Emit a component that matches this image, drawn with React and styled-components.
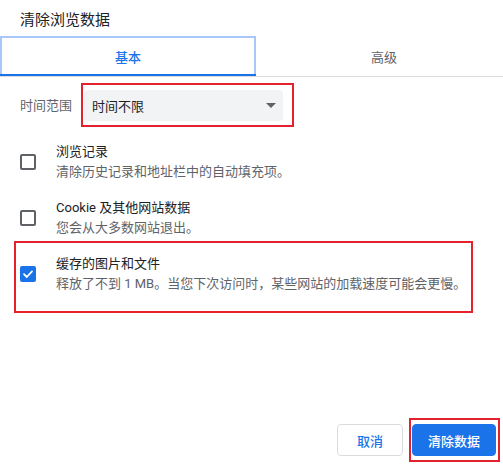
import styled, { createGlobalStyle } from "styled-components";

const GlobalStyle = createGlobalStyle`
  html, body {
    margin: 0;
    padding: 0;
    background: #fff;
  }
  body {
    font-family: Roboto, "Noto Sans CJK SC", "Noto Sans", sans-serif;
    color: #202124;
  }
`;

const Dialog = styled.div`
  position: relative;
  width: 503px;
  height: 464px;
  display: flex;
  flex-direction: column;
  overflow: hidden;
  background: #fff;
`;

const Title = styled.h2`
  margin: 0;
  padding: 10px 20px 0;
  font-size: 15px;
  line-height: 20px;
  font-weight: 400;
  color: #202124;
`;

const Tabs = styled.div`
  margin-top: 6px;
  display: grid;
  grid-template-columns: 256px 256px;
  border-bottom: 1px solid #dadce0;
`;

const Tab = styled.div`
  position: relative;
  height: 40px;
  display: flex;
  align-items: center;
  justify-content: center;
  font-size: 13px;
  font-weight: ${(p) => (p.$active ? 500 : 400)};
  color: ${(p) => (p.$active ? "#1a73e8" : "#5f6368")};
  box-shadow: ${(p) => (p.$active ? "inset 0 0 0 2px #a8c7fa" : "none")};

  &::after {
    content: "";
    display: ${(p) => (p.$active ? "block" : "none")};
    position: absolute;
    left: 0;
    right: 0;
    bottom: 0;
    height: 2px;
    background: #1a73e8;
  }
`;

const Highlight = styled.span`
  position: absolute;
  top: ${(p) => p.$top}px;
  left: ${(p) => p.$left}px;
  right: ${(p) => p.$right}px;
  bottom: ${(p) => p.$bottom}px;
  border: 2px solid #e3222d;
  pointer-events: none;
`;

const RangeRow = styled.div`
  margin-top: 13px;
  padding: 0 20px;
  display: flex;
  align-items: center;
  gap: 12px;
`;

const Label = styled.span`
  font-size: 13px;
  line-height: 20px;
  color: #5f6368;
`;

const SelectWrap = styled.div`
  position: relative;
`;

const Select = styled.div`
  width: 199px;
  height: 31px;
  box-sizing: border-box;
  padding: 0 7px 0 8px;
  display: flex;
  align-items: center;
  justify-content: space-between;
  background: #f1f3f4;
  border-radius: 4px;
  font-size: 13px;
  color: #202124;
`;

const Arrow = styled.span`
  width: 0;
  height: 0;
  border-left: 5px solid transparent;
  border-right: 5px solid transparent;
  border-top: 5px solid #5f6368;
`;

const List = styled.div`
  margin-top: 13px;
  padding: 0 20px;
  display: flex;
  flex-direction: column;
`;

const Row = styled.div`
  position: relative;
  padding: 8px 0;
  display: flex;
  align-items: center;
  gap: 20px;
`;

const Box = styled.span`
  width: 16px;
  height: 16px;
  box-sizing: border-box;
  flex: none;
  border-radius: 2px;
  border: 2px solid ${(p) => (p.$checked ? "#1a73e8" : "#5f6368")};
  background: ${(p) => (p.$checked ? "#1a73e8" : "transparent")};
  display: flex;
  align-items: center;
  justify-content: center;
`;

const Texts = styled.div`
  display: flex;
  flex-direction: column;
`;

const RowTitle = styled.span`
  font-size: 13px;
  line-height: 20px;
  color: #202124;
`;

const RowSub = styled.span`
  font-size: 13px;
  line-height: 20px;
  color: #5f6368;
`;

const Footer = styled.div`
  margin-top: auto;
  padding: 0 7px 8px 0;
  display: flex;
  justify-content: flex-end;
  gap: 9px;
`;

const Button = styled.button`
  position: relative;
  height: 32px;
  box-sizing: border-box;
  padding: 0;
  width: ${(p) => p.$width}px;
  border-radius: 4px;
  font-family: inherit;
  font-size: 13px;
  font-weight: 500;
  border: 1px solid ${(p) => (p.$primary ? "#1a73e8" : "#dadce0")};
  background: ${(p) => (p.$primary ? "#1a73e8" : "#fff")};
  color: ${(p) => (p.$primary ? "#fff" : "#1a73e8")};
`;

const Check = () => (
  <svg width="12" height="12" viewBox="0 0 12 12">
    <path
      d="M2 6.2 L4.8 9 L10 3.4"
      fill="none"
      stroke="#fff"
      strokeWidth="1.8"
      strokeLinecap="round"
      strokeLinejoin="round"
    />
  </svg>
);

const items = [
  { title: "浏览记录", sub: "清除历史记录和地址栏中的自动填充项。", checked: false },
  { title: "Cookie 及其他网站数据", sub: "您会从大多数网站退出。", checked: false },
  {
    title: "缓存的图片和文件",
    sub: "释放了不到 1 MB。当您下次访问时，某些网站的加载速度可能会更慢。",
    checked: true,
    marked: true,
  },
];

export default function App() {
  return (
    <>
      <GlobalStyle />
      <Dialog>
        <Title>清除浏览数据</Title>
        <Tabs>
          <Tab $active>基本</Tab>
          <Tab>高级</Tab>
        </Tabs>
        <RangeRow>
          <Label>时间范围</Label>
          <SelectWrap>
            <Select>
              <span>时间不限</span>
              <Arrow />
            </Select>
            <Highlight $top={-7} $left={-3} $right={-11} $bottom={-6} />
          </SelectWrap>
        </RangeRow>
        <List>
          {items.map((it) => (
            <Row key={it.title}>
              <Box $checked={it.checked}>{it.checked && <Check />}</Box>
              <Texts>
                <RowTitle>{it.title}</RowTitle>
                <RowSub>{it.sub}</RowSub>
              </Texts>
              {it.marked && (
                <Highlight $top={-5} $left={-6} $right={10} $bottom={-11} />
              )}
            </Row>
          ))}
        </List>
        <Footer>
          <Button $width={66}>取消</Button>
          <Button $primary $width={84}>
            清除数据
            <Highlight $top={-7} $left={-4} $right={-5} $bottom={-7} />
          </Button>
        </Footer>
      </Dialog>
    </>
  );
}
